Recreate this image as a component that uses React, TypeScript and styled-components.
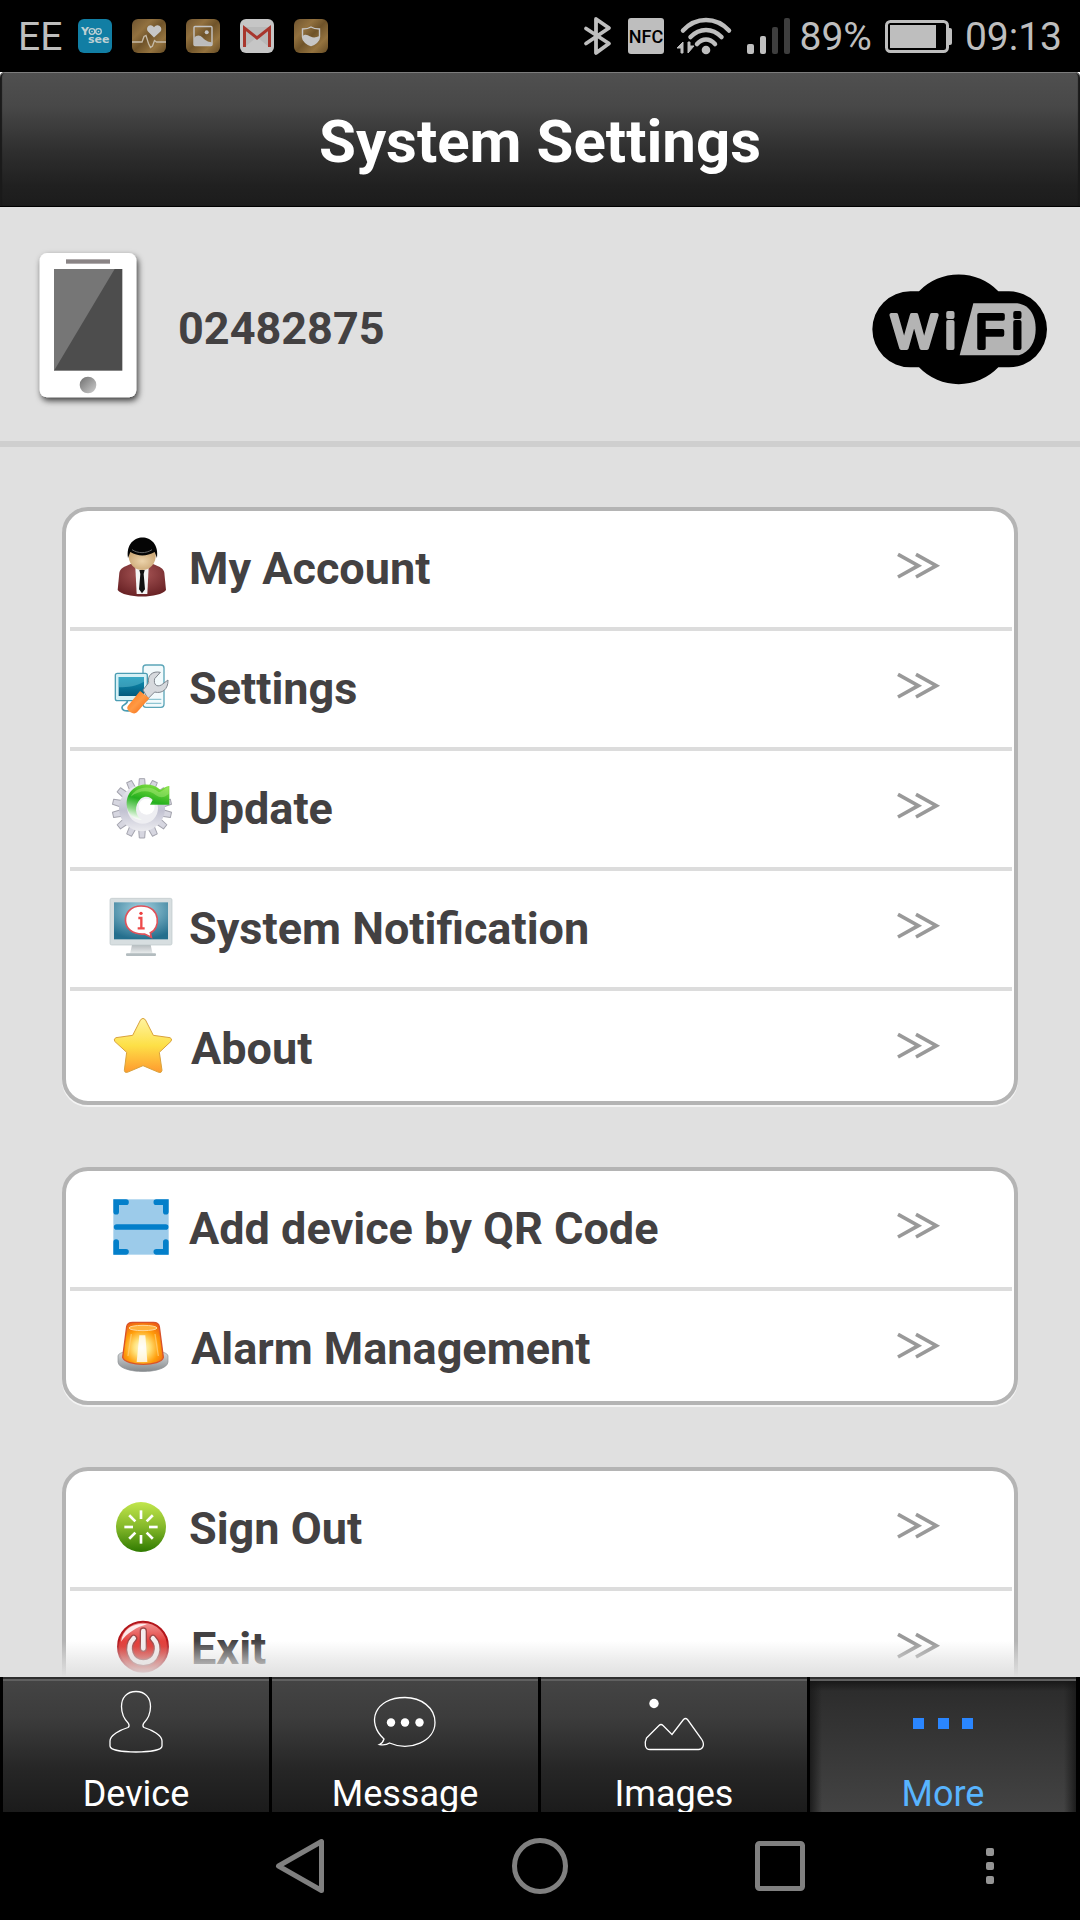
import React from 'react';
import styled, { createGlobalStyle, css } from 'styled-components';

const GlobalStyle = createGlobalStyle`
  *, *::before, *::after { box-sizing: border-box; }
  body { margin: 0; background: #000; font-family: Roboto, "Liberation Sans", sans-serif; }
  button { font: inherit; color: inherit; border: 0; padding: 0; background: none; cursor: pointer; }
  svg { display: block; flex: none; overflow: visible; }
`;

const Screen = styled.div`
  display: flex;
  flex-direction: column;
  height: 100vh;
  background: #e0e0e0;
`;

/* ---------- status bar ---------- */

const StatusBar = styled.div`
  flex: none;
  display: flex;
  align-items: center;
  justify-content: space-between;
  height: 72px;
  padding: 0 18px;
  background: #000;
  color: #bebebe;
  font-size: 39px;
  line-height: 46px;
`;

const StatusGroup = styled.div<{ $gap: number }>`
  display: flex;
  align-items: center;
  gap: ${(p) => p.$gap}px;
`;

const StatusText = styled.span`
  padding-top: 2px;
`;

/* ---------- header ---------- */

const HeaderWrap = styled.header`
  flex: none;
  background: #fff;
`;

const HeaderBar = styled.div`
  display: flex;
  align-items: center;
  justify-content: center;
  height: 135px;
  padding-top: 6px;
  border-radius: 5px 5px 0 0;
  border-bottom: 1px solid #000;
  background: linear-gradient(#505050, #484848 25%, #2e2e2e 60%, #202020 85%, #1c1c1c);
  box-shadow: inset 0 1px 0 #7c7c7c, inset 2px 0 1px #1a1a1a, inset -2px 0 1px #1a1a1a;
`;

const Title = styled.h1`
  margin: 0;
  color: #fff;
  font-size: 60px;
  line-height: 70px;
  font-weight: 700;
`;

/* ---------- account strip ---------- */

const Profile = styled.section`
  flex: none;
  display: flex;
  align-items: center;
  height: 240px;
  padding: 10px 33px 0 36px;
  border-bottom: 6px solid #cfcfcf;
`;

const AccountId = styled.div`
  flex: 1;
  margin-left: 38px;
  color: #434142;
  font-size: 45px;
  line-height: 52px;
  font-weight: 700;
`;

/* ---------- menu ---------- */

const ContentWrap = styled.main`
  flex: 1;
  min-height: 0;
  display: flex;
  position: relative;
  &::after {
    content: '';
    position: absolute;
    left: 0;
    right: 0;
    bottom: 0;
    height: 36px;
    background: linear-gradient(rgba(224, 224, 224, 0), rgba(224, 224, 224, 0.55) 50%, #e0e0e0);
    pointer-events: none;
  }
`;

const Scroller = styled.div`
  flex: 1;
  display: flex;
  flex-direction: column;
  gap: 62px;
  padding: 60px 62px;
  overflow-y: auto;
  scrollbar-width: none;
`;

const Card = styled.ul`
  flex: none;
  list-style: none;
  margin: 0;
  padding: 0 2px 0 4px;
  border: 4px solid #b4b4b4;
  border-radius: 26px;
  background: #fff;
  box-shadow: 0 2px 0 #f4f4f4;
`;

const Item = styled.li`
  & + & { border-top: 4px solid #dcdcdc; }
  &:last-child { margin-bottom: -6px; }
`;

const Row = styled.button`
  display: flex;
  align-items: center;
  width: 100%;
  height: 116px;
  padding: 0 70px 0 40px;
  text-align: left;
`;

const RowLabel = styled.span`
  flex: 1;
  margin-left: 17px;
  color: #434142;
  font-size: 45px;
  line-height: 52px;
  font-weight: 700;
`;

/* ---------- tabs ---------- */

const TabBar = styled.nav`
  flex: none;
  display: grid;
  grid-template-columns: repeat(4, 1fr);
  gap: 3px;
  height: 135px;
  padding: 0 4px 0 3px;
  background: #000;
`;

const Tab = styled.button<{ $active: boolean }>`
  display: flex;
  flex-direction: column;
  align-items: center;
  gap: 21px;
  height: 135px;
  padding-top: 12px;
  overflow: hidden;
  color: #fff;
  font-size: 36px;
  line-height: 36px;
  background: linear-gradient(#2e2e2e 2px, #606060 2px, #606060 4px, #444 4px, #3c3c3c 30%, #262626 68%, #1b1b1b);
  ${(p) =>
    p.$active &&
    css`
      color: #58b4ff;
      background:
        linear-gradient(#2e2e2e 2px, #606060 2px, #606060 4px, rgba(20, 20, 20, 0.8) 4px, rgba(20, 20, 20, 0) 14px),
        linear-gradient(90deg, #1c1c1c, rgba(28, 28, 28, 0) 12px, rgba(28, 28, 28, 0) calc(100% - 12px), #1c1c1c),
        linear-gradient(#2a2a2a, #434343);
    `}
`;

const SystemNav = styled.nav`
  flex: none;
  display: grid;
  grid-template-columns: 3fr 4fr 4fr 4fr 3fr;
  height: 108px;
  background: #000;
`;

const SystemKey = styled.button`
  display: grid;
  place-items: center;
  height: 108px;
  &:first-child { grid-column-start: 2; }
`;

/* ---------- status icons ---------- */

const AppTile = ({ fill, children }: { fill: string; children: React.ReactNode }) => (
  <svg width="34" height="34" viewBox="0 0 34 34" aria-hidden="true">
    <defs>
      <linearGradient id="bronze" x1="0" y1="0" x2="1" y2="1">
        <stop offset="0" stopColor="#6f5430" />
        <stop offset="0.3" stopColor="#92713f" />
        <stop offset="0.5" stopColor="#6f5329" />
        <stop offset="0.75" stopColor="#94733f" />
        <stop offset="1" stopColor="#654b24" />
      </linearGradient>
    </defs>
    <rect width="34" height="34" rx="6" fill={fill} />
    {children}
  </svg>
);

const YooseeIcon = () => (
  <AppTile fill="#117ea4">
    <g fill="#bfd0d4" fontFamily="'DejaVu Sans', sans-serif" fontWeight="700" fontSize="11">
      <text x="3" y="16">Y</text>
      <text x="10" y="24">see</text>
    </g>
    <g fill="none" stroke="#bfd0d4" strokeWidth="1.3">
      <circle cx="14" cy="12.5" r="2.8" />
      <circle cx="20.5" cy="12.5" r="2.8" />
    </g>
    <circle cx="14" cy="12.5" r="0.8" fill="#bfd0d4" />
    <circle cx="20.5" cy="12.5" r="0.8" fill="#bfd0d4" />
  </AppTile>
);

const HealthIcon = () => (
  <AppTile fill="url(#bronze)">
    <path d="M22 18.500 16 12.500c-2.500-3 .5-7 3.500-6 1.300.3 2 1 2.500 1.700.5-.7 1.200-1.400 2.500-1.700 3-1 6.500 3 4 6z" fill="#c6c6c6" />
    <path d="M0 23h10l2-5.500 2-1 2.500 8L18.500 28.500l2-1.500 2-5.500L24.500 23H34" fill="none" stroke="#c6bba8" strokeWidth="1.300" />
  </AppTile>
);

const GalleryIcon = () => (
  <AppTile fill="url(#bronze)">
    <rect x="8" y="7.500" width="18" height="19" rx="1" fill="none" stroke="#c4c4c4" strokeWidth="1.400" />
    <circle cx="20.700" cy="13.300" r="2" fill="#c4c4c4" />
    <path d="M8 19c3-3.500 6-3 8.500-.5s4.500 4 9.500 5v3H8z" fill="#bcbcbc" />
  </AppTile>
);

const GmailIcon = () => (
  <AppTile fill="#c6c6c6">
    <path d="M3 8h28v20H3z" fill="#b9b9b9" />
    <path d="M5 28 17 18l12 10" fill="#c6c6c6" />
    <path d="M4.500 28V9L17 19 29.500 9v19" fill="none" stroke="#a8362d" strokeWidth="3" />
  </AppTile>
);

const ShieldIcon = () => (
  <AppTile fill="url(#bronze)">
    <path d="M17 8c3 2 6 2 8.500 2v8c0 4-5 7.500-8.500 8.500C13.500 25.500 8.500 22 8.500 18v-8C11 10 14 10 17 8z" fill="none" stroke="#c6c6c6" strokeWidth="1.400" />
    <path d="M8.500 17c3-2.500 5-1 8 .5s5.500 1 9-.5c0 5-5 8.500-8.500 9.500-3.500-1-8.500-4.500-8.500-9.500z" fill="#c6c6c6" />
  </AppTile>
);

const BluetoothIcon = () => (
  <svg width="31" height="38" viewBox="0 0 31 38" fill="none" stroke="#bebebe" strokeWidth="3.800" strokeLinejoin="round" strokeLinecap="round" aria-hidden="true">
    <path d="M2 11.500 25 26.500 12 36V2l13 9L2 26.500" />
  </svg>
);

const NfcIcon = () => (
  <svg width="36" height="36" viewBox="0 0 36 36" aria-label="NFC">
    <rect width="36" height="36" rx="3" fill="#bebebe" />
    <text x="18" y="25" textAnchor="middle" fontFamily="Roboto, sans-serif" fontSize="18" fontWeight="500" fill="#000">NFC</text>
  </svg>
);

const WifiIcon = () => (
  <svg width="57" height="38" viewBox="0 0 57 38" aria-hidden="true">
    <g fill="none" stroke="#bebebe" strokeWidth="4.500" strokeLinecap="round">
      <path d="M6 13.500c13-14 33-14 46 0" />
      <path d="M13.500 20c9-9.500 22-9.500 31 0" />
      <path d="M20 27c5.500-6 12.500-6 18 0" />
    </g>
    <circle cx="29" cy="33" r="4.300" fill="#bebebe" />
    <path d="M6 25v11H4v-5H0zM11 36V25h2v4h4z" fill="#bebebe" stroke="#bebebe" />
  </svg>
);

const SignalIcon = () => (
  <svg width="44" height="36" viewBox="0 0 44 36" aria-hidden="true">
    <rect x="0" y="26" width="7" height="10" rx="2" fill="#bebebe" />
    <rect x="13" y="18" width="6" height="18" rx="2" fill="#bebebe" />
    <rect x="25" y="9" width="6" height="27" rx="2" fill="#3e3e3e" />
    <rect x="37" y="0" width="6" height="36" rx="2" fill="#3e3e3e" />
  </svg>
);

const BatteryIcon = () => (
  <svg width="67" height="33" viewBox="0 0 67 33" aria-hidden="true">
    <rect x="1.500" y="1.500" width="61" height="30" rx="4" fill="none" stroke="#bebebe" strokeWidth="3" />
    <rect x="5" y="5" width="46" height="23" fill="#bebebe" />
    <path d="M63 8h2q2 0 2 2v13q0 2-2 2h-2z" fill="#bebebe" />
  </svg>
);

/* ---------- profile artwork ---------- */

const PhoneArt = () => (
  <svg width="104" height="160" viewBox="108 140 312 480" aria-hidden="true">
    <defs>
      <filter id="phoneShadow" x="-20%" y="-20%" width="150%" height="150%">
        <feDropShadow dx="5" dy="10" stdDeviation="9" floodColor="#000" floodOpacity="0.75" />
      </filter>
      <linearGradient id="homeKey" x1="0" y1="0" x2="1" y2="1">
        <stop offset="0" stopColor="#6e6e6e" />
        <stop offset="1" stopColor="#cfcfcf" />
      </linearGradient>
    </defs>
    <g transform="translate(0 6)">
      <rect x="119" y="146" width="290" height="433" rx="22" fill="#fff" filter="url(#phoneShadow)" />
      <rect x="198" y="165" width="132" height="13" fill="#8a8485" />
      <rect x="162" y="194" width="205" height="305" fill="#4d4d4d" />
      <path d="M162 194h182L162 499z" fill="#767676" />
      <circle cx="264" cy="542" r="25" fill="url(#homeKey)" />
    </g>
  </svg>
);

const WifiLogo = () => (
  <svg width="174" height="110" viewBox="220 101 522 330" role="img" aria-label="WiFi">
    <path d="M358 153a165 165 0 0 1 238 0h32a113 113 0 0 1 0 228h-32a165 165 0 0 1-238 0h-26a113 113 0 0 1 0-228z" fill="#000" />
    <path d="M521 189h132c40 6 55 40 55 78s-18 68-50 78H480z" fill="#b4b4b4" />
    <g fontFamily="'Liberation Sans', sans-serif" fontSize="145" strokeWidth="12" strokeLinejoin="round">
      <text x="275 436" y="322" fill="#b4b4b4" stroke="#b4b4b4">Wi</text>
      <text x="527 637" y="322" fill="#000" stroke="#000">Fi</text>
    </g>
  </svg>
);

/* ---------- menu icons ---------- */

const AccountIcon = () => (
  <svg width="62" height="62" viewBox="210 144 186 186" aria-hidden="true">
    <defs>
      <radialGradient id="jacket" cx="0.5" cy="0.3" r="0.7">
        <stop offset="0" stopColor="#a85656" />
        <stop offset="1" stopColor="#6a2326" />
      </radialGradient>
      <radialGradient id="skin" cx="0.5" cy="0.5" r="0.5">
        <stop offset="0" stopColor="#ecd3ab" />
        <stop offset="1" stopColor="#cfac7b" />
      </radialGradient>
    </defs>
    <path d="M272 222c-20 8-32 14-34 26l-5 52c18 26 128 26 145 0l-5-52c-2-12-14-18-34-26z" fill="url(#jacket)" />
    <path d="M286 232l4 80h32l4-80z" fill="#f4f4f4" />
    <path d="M298 240h16l-3 12 4 46-9 12-9-12 4-46z" fill="#111" />
    <path d="M266 186h81c8 72-89 72-81 0z" fill="url(#skin)" />
    <path d="M264 204c-12-82 99-82 87 0l-7-18c-24 14-50 14-73 0z" fill="#050505" />
    <path d="M276 179c18 12 42 12 60 0" fill="none" stroke="#666" strokeWidth="3" />
  </svg>
);

const ToolsIcon = () => (
  <svg width="62" height="62" viewBox="210 504 186 186" aria-hidden="true">
    <defs>
      <linearGradient id="pcScreen" x1="0" y1="0" x2="0" y2="1">
        <stop offset="0" stopColor="#0f93b7" />
        <stop offset="1" stopColor="#045a7c" />
      </linearGradient>
      <linearGradient id="handle" x1="0" y1="0" x2="1" y2="1">
        <stop offset="0" stopColor="#ff6f10" />
        <stop offset="0.5" stopColor="#ff9a45" />
        <stop offset="1" stopColor="#f25c05" />
      </linearGradient>
    </defs>
    <rect x="309" y="525" width="63" height="127" rx="9" fill="#f2fafc" stroke="#5ba5b8" strokeWidth="4" />
    <path d="M318 628h46M318 640h46" stroke="#8fc5d2" strokeWidth="4" />
    <path d="M262 630c4 14-16 12-16 22s10 12 24 10" fill="none" stroke="#4b9db3" strokeWidth="5" />
    <rect x="226" y="550" width="96" height="82" rx="6" fill="#d6f0f5" stroke="#4b9db3" strokeWidth="4" />
    <rect x="236" y="561" width="76" height="57" fill="url(#pcScreen)" />
    <path d="M236 561h76v14c-24 14-46 16-76 17z" fill="#5cb9d0" opacity="0.55" />
    <path d="M309 600l17-22c-5-22 12-36 35-31l-17 19c-4 18 6 26 20 19l20-15c1 28-18 42-40 36l-20 20z" fill="#d6d9dd" stroke="#80868e" strokeWidth="3" strokeLinejoin="round" />
    <path d="M300 603l28 22-37 42q-8 7-21-1-13-10-6-19z" fill="url(#handle)" />
  </svg>
);

const TEETH = Array.from({ length: 14 }, (_, i) => (i * 360) / 14);

const UpdateIcon = () => (
  <svg width="62" height="62" viewBox="210 114 186 186" aria-hidden="true">
    <defs>
      <linearGradient id="gear" x1="0" y1="0" x2="0" y2="1">
        <stop offset="0" stopColor="#eeeef2" />
        <stop offset="0.55" stopColor="#c2c2d2" />
        <stop offset="1" stopColor="#ececf0" />
      </linearGradient>
      <linearGradient id="swirl" x1="0.6" y1="0" x2="0.3" y2="1">
        <stop offset="0" stopColor="#7bdc3e" />
        <stop offset="0.45" stopColor="#25b01e" />
        <stop offset="0.75" stopColor="#8fd98a" />
        <stop offset="1" stopColor="#fff" />
      </linearGradient>
    </defs>
    {TEETH.map((angle) => (
      <path key={angle} d="M296 142l2-26h16l2 26z" transform={`rotate(${angle} 306 205)`} fill="#d6d6e0" stroke="#a4a4ae" strokeWidth="3" strokeLinejoin="round" />
    ))}
    <circle cx="306" cy="205" r="69" fill="url(#gear)" />
    <circle cx="308" cy="205" r="46" fill="#eeeef2" />
    <circle cx="320" cy="200" r="24" fill="#fff" />
    <path d="M362 150c-38-34-104-14-102 44 2 28 20 44 46 46-22-14-24-44-4-64 14-10 30-6 36 4l-8 14h58v-56c-10 2-18 6-26 12z" fill="url(#swirl)" />
    <path d="M356 156c-30-26-72-12-84 14 26-20 56-22 76-4 14 10 26 6 38-4v-22c-10 2-20 16-30 16z" fill="#b8f08a" opacity="0.4" />
  </svg>
);

const NotificationIcon = () => (
  <svg width="62" height="62" viewBox="210 474 186 186" aria-hidden="true">
    <defs>
      <radialGradient id="tv" cx="0.5" cy="0.2" r="0.8">
        <stop offset="0" stopColor="#a6d3e2" />
        <stop offset="1" stopColor="#256f8d" />
      </radialGradient>
      <linearGradient id="stand" x1="0" y1="0" x2="0" y2="1">
        <stop offset="0" stopColor="#b4babd" />
        <stop offset="1" stopColor="#eceff0" />
      </linearGradient>
    </defs>
    <path d="M276 614h56l6 28h-68z" fill="url(#stand)" />
    <rect x="258" y="640" width="90" height="8" rx="3" fill="#b3bcbf" />
    <rect x="210" y="475" width="186" height="140" rx="5" fill="#d7dee0" stroke="#bcc6c9" strokeWidth="2" />
    <rect x="222" y="487" width="162" height="111" fill="url(#tv)" />
    <path d="M303 498c62 0 58 70 28 80l3 14-20-10c-76 6-74-84-11-84z" fill="#fff" stroke="#e0525a" strokeWidth="5" />
    <circle cx="303" cy="520" r="5" fill="#ee3d3d" />
    <path d="M295 534h9v30M293 565h21" fill="none" stroke="#ee4b4b" strokeWidth="7" />
  </svg>
);

const StarIcon = () => (
  <svg width="64" height="62" viewBox="210 834 192 186" aria-hidden="true">
    <defs>
      <linearGradient id="star" x1="0" y1="0" x2="0" y2="1">
        <stop offset="0" stopColor="#fff3a0" />
        <stop offset="0.5" stopColor="#fde047" />
        <stop offset="1" stopColor="#ff9a2e" />
      </linearGradient>
    </defs>
    <path d="M302 839q7-8 14 0l24 47 50 7q8 3 3 11l-35 33 8 54q-1 9-10 6l-47-20-47 20q-9 2-9-6l7-54-36-33q-4-8 4-11l50-7z" fill="url(#star)" stroke="#d9a23c" strokeWidth="3" strokeLinejoin="round" />
  </svg>
);

const QrIcon = () => (
  <svg width="62" height="62" viewBox="210 144 186 186" aria-hidden="true">
    <rect x="220" y="148" width="166" height="166" fill="#9ccbea" />
    <g fill="none" stroke="#037fca" strokeWidth="17" strokeLinecap="round">
      <path d="M228.500 185v-28.500H258M349 156.500h28.500V185M228.500 276v29.500H258M349 305.500h28.500V276M230 231h147" />
    </g>
  </svg>
);

const AlarmIcon = () => (
  <svg width="64" height="62" viewBox="210 504 192 186" aria-hidden="true">
    <defs>
      <linearGradient id="alarmBase" x1="0" y1="0" x2="0" y2="1">
        <stop offset="0" stopColor="#dfe2e4" />
        <stop offset="1" stopColor="#85898c" />
      </linearGradient>
      <radialGradient id="alarmLamp" cx="0.47" cy="0.6" r="0.65">
        <stop offset="0" stopColor="#fffbe0" />
        <stop offset="0.3" stopColor="#ffe27a" />
        <stop offset="0.65" stopColor="#ff9d0a" />
        <stop offset="1" stopColor="#ee6212" />
      </radialGradient>
    </defs>
    <path d="M234 618c0-24 150-24 150 0v18c-4 38-146 38-150 0z" fill="url(#alarmBase)" stroke="#8d9194" strokeWidth="2" />
    <path d="M260 530q2-13 18-13h62q16 0 18 13l12 92c-6 28-114 28-122 0z" fill="url(#alarmLamp)" stroke="#d9532a" strokeWidth="4" />
    <ellipse cx="309" cy="534" rx="42" ry="8" fill="#ffb23c" stroke="#ffd79a" strokeWidth="3" />
    <path d="M298 556h18l6 80h-32z" fill="#fff" opacity="0.8" />
    <path d="M274 552l-10 66M345 552l10 66" stroke="#ffd27a" strokeWidth="4" opacity="0.7" />
  </svg>
);

const SignOutIcon = () => (
  <svg width="62" height="62" viewBox="210 174 186 186" aria-hidden="true">
    <defs>
      <linearGradient id="leaf" x1="0" y1="0" x2="0" y2="1">
        <stop offset="0" stopColor="#c2e64c" />
        <stop offset="0.5" stopColor="#84b82a" />
        <stop offset="1" stopColor="#2f7a00" />
      </linearGradient>
    </defs>
    <circle cx="303" cy="261" r="75" fill="url(#leaf)" />
    {[0, 45, 90, 135, 180, 225, 270, 315].map((angle) => (
      <path key={angle} d="M303 211v26" stroke="#fff" strokeWidth="8" transform={`rotate(${angle} 303 261)`} />
    ))}
  </svg>
);

const ExitIcon = () => (
  <svg width="64" height="62" viewBox="210 534 192 186" aria-hidden="true">
    <defs>
      <linearGradient id="ruby" x1="0" y1="0" x2="0" y2="1">
        <stop offset="0" stopColor="#f29a9a" />
        <stop offset="0.5" stopColor="#df2722" />
        <stop offset="1" stopColor="#c32a26" />
      </linearGradient>
    </defs>
    <circle cx="309" cy="620" r="75" fill="url(#ruby)" stroke="#b3161b" strokeWidth="6" />
    <path d="M243 605c6-40 40-58 78-52-30 8-60 26-78 52z" fill="#fff" opacity="0.85" />
    <g fill="none" strokeLinecap="round">
      <path d="M281 595c-24 24-12 73 29 73s53-49 29-73M310 573v52" stroke="#a04848" strokeWidth="22" />
      <path d="M281 595c-24 24-12 73 29 73s53-49 29-73M310 573v52" stroke="#f4eded" strokeWidth="14" />
    </g>
  </svg>
);

const ChevronsIcon = () => (
  <svg width="46" height="36" viewBox="48 63 138 108" fill="none" stroke="#999" strokeWidth="11" aria-hidden="true">
    <path d="M54 73l61 34-61 34M108 73l61 34-61 34" />
  </svg>
);

/* ---------- tab icons ---------- */

const DeviceIcon = () => (
  <svg width="66" height="66" viewBox="0 0 66 66" fill="none" stroke="#fff" strokeWidth="1.300" aria-hidden="true">
    <path d="M33 2.500c9 0 14.500 6 14.500 15 0 8-4 14-7 17-1 2-1 3 .5 4C49 41 59 46 59 52v5c0 4-12 6-26 6S7 61 7 57v-5c0-6 10-11 18-13.500 1.500-1 1.500-2 .5-4-3-3-7-9-7-17 0-9 5.500-15 14.500-15z" />
  </svg>
);

const MessageIcon = () => (
  <svg width="66" height="66" viewBox="0 0 66 66" aria-hidden="true">
    <path d="M12 50C-6 34 2 8.500 33 8.500c16 0 30 10 30 25C63 52 38 63 17.500 54c-3 2-7 2-10 1.500 2-1 4-3.500 4.500-5.500z" fill="none" stroke="#fff" strokeWidth="1.300" />
    <g fill="#fff">
      <circle cx="19" cy="33.500" r="4.200" />
      <circle cx="33" cy="33.500" r="4.200" />
      <circle cx="47.500" cy="33.500" r="4.200" />
    </g>
  </svg>
);

const ImagesIcon = () => (
  <svg width="66" height="66" viewBox="0 0 66 66" aria-hidden="true">
    <circle cx="13" cy="14.500" r="4.700" fill="#fff" />
    <path d="M5.500 49 18 36.500q2-2 4 0L31 45.500 42.500 30.500q2-2 4 0L60.500 50c4 6 1 10.500-3 10.500H9c-5 0-6-6-3.500-11.500z" fill="none" stroke="#fff" strokeWidth="1.300" />
  </svg>
);

const MoreIcon = () => (
  <svg width="66" height="66" viewBox="0 0 66 66" fill="#2a86ff" aria-hidden="true">
    <rect x="3" y="29" width="11" height="11" />
    <rect x="28" y="29" width="11" height="11" />
    <rect x="52" y="29" width="11" height="11" />
  </svg>
);

/* ---------- data ---------- */

type Entry = { label: string; icon: React.FC };

const MENU: Entry[][] = [
  [
    { label: 'My Account', icon: AccountIcon },
    { label: 'Settings', icon: ToolsIcon },
    { label: 'Update', icon: UpdateIcon },
    { label: 'System Notification', icon: NotificationIcon },
    { label: 'About', icon: StarIcon },
  ],
  [
    { label: 'Add device by QR Code', icon: QrIcon },
    { label: 'Alarm Management', icon: AlarmIcon },
  ],
  [
    { label: 'Sign Out', icon: SignOutIcon },
    { label: 'Exit', icon: ExitIcon },
  ],
];

const TABS: Entry[] = [
  { label: 'Device', icon: DeviceIcon },
  { label: 'Message', icon: MessageIcon },
  { label: 'Images', icon: ImagesIcon },
  { label: 'More', icon: MoreIcon },
];

export default function App() {
  const [activeTab, setActiveTab] = React.useState('More');

  return (
    <Screen>
      <GlobalStyle />
      <StatusBar>
        <StatusGroup $gap={16}>
          <StatusText>EE</StatusText>
          <StatusGroup $gap={20}>
            <YooseeIcon />
            <HealthIcon />
            <GalleryIcon />
            <GmailIcon />
            <ShieldIcon />
          </StatusGroup>
        </StatusGroup>
        <StatusGroup $gap={13}>
          <BluetoothIcon />
          <NfcIcon />
          <WifiIcon />
          <StatusGroup $gap={8}>
            <SignalIcon />
            <StatusText>89%</StatusText>
          </StatusGroup>
          <BatteryIcon />
          <StatusText>09:13</StatusText>
        </StatusGroup>
      </StatusBar>

      <HeaderWrap>
        <HeaderBar>
          <Title>System Settings</Title>
        </HeaderBar>
      </HeaderWrap>

      <Profile>
        <PhoneArt />
        <AccountId>02482875</AccountId>
        <WifiLogo />
      </Profile>

      <ContentWrap>
        <Scroller>
          {MENU.map((group) => (
            <Card key={group[0].label}>
              {group.map(({ label, icon: Icon }) => (
                <Item key={label}>
                  <Row type="button">
                    <Icon />
                    <RowLabel>{label}</RowLabel>
                    <ChevronsIcon />
                  </Row>
                </Item>
              ))}
            </Card>
          ))}
        </Scroller>
      </ContentWrap>

      <TabBar>
        {TABS.map(({ label, icon: Icon }) => (
          <Tab key={label} type="button" $active={label === activeTab} onClick={() => setActiveTab(label)}>
            <Icon />
            <span>{label}</span>
          </Tab>
        ))}
      </TabBar>

      <SystemNav>
        <SystemKey type="button" aria-label="Back">
          <svg width="50" height="56" viewBox="0 0 50 56" fill="none" stroke="#808080" strokeWidth="5" strokeLinejoin="round">
            <path d="M46.500 3.500v49L3.500 28z" />
          </svg>
        </SystemKey>
        <SystemKey type="button" aria-label="Home">
          <svg width="56" height="56" viewBox="0 0 56 56" fill="none" stroke="#808080" strokeWidth="5">
            <circle cx="28" cy="28" r="25.500" />
          </svg>
        </SystemKey>
        <SystemKey type="button" aria-label="Recent apps">
          <svg width="50" height="50" viewBox="0 0 50 50" fill="none" stroke="#808080" strokeWidth="5">
            <rect x="2.500" y="2.500" width="45" height="45" rx="2" />
          </svg>
        </SystemKey>
        <SystemKey type="button" aria-label="Menu">
          <svg width="8" height="36" viewBox="0 0 8 36" fill="#959595">
            <rect width="8" height="8" rx="2" />
            <rect y="14" width="8" height="8" rx="2" />
            <rect y="28" width="8" height="8" rx="2" />
          </svg>
        </SystemKey>
      </SystemNav>
    </Screen>
  );
}
